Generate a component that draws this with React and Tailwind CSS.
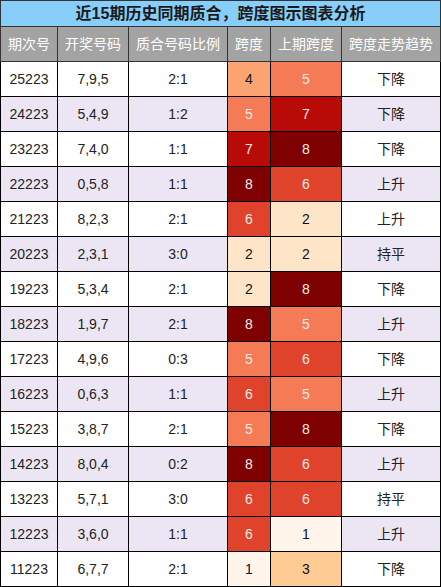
import React from "react";

const rows = [
  ["25223", "7,9,5", "2:1", 4, 5, "下降"],
  ["24223", "5,4,9", "1:2", 5, 7, "下降"],
  ["23223", "7,4,0", "1:1", 7, 8, "下降"],
  ["22223", "0,5,8", "1:1", 8, 6, "上升"],
  ["21223", "8,2,3", "2:1", 6, 2, "上升"],
  ["20223", "2,3,1", "3:0", 2, 2, "持平"],
  ["19223", "5,3,4", "2:1", 2, 8, "下降"],
  ["18223", "1,9,7", "2:1", 8, 5, "上升"],
  ["17223", "4,9,6", "0:3", 5, 6, "下降"],
  ["16223", "0,6,3", "1:1", 6, 5, "上升"],
  ["15223", "3,8,7", "2:1", 5, 8, "下降"],
  ["14223", "8,0,4", "0:2", 8, 6, "上升"],
  ["13223", "5,7,1", "3:0", 6, 6, "持平"],
  ["12223", "3,6,0", "1:1", 6, 1, "上升"],
  ["11223", "6,7,7", "2:1", 1, 3, "下降"],
];

// heat colours for span values
const heat = {
  0: "bg-[#fff5eb] text-[#111]",
  1: "bg-[#fff5eb] text-[#111]",
  2: "bg-[#fee5c8] text-[#111]",
  3: "bg-[#fdcb93] text-[#111]",
  4: "bg-[#fca572] text-[#111]",
  5: "bg-[#f47b55] text-[#f5ece8]",
  6: "bg-[#e0432c] text-[#f5ece8]",
  7: "bg-[#b80b08] text-[#f5ece8]",
  8: "bg-[#7f0000] text-[#f5ece8]",
  9: "bg-[#7f0000] text-[#f5ece8]",
};

const headers = ["期次号", "开奖号码", "质合号码比例", "跨度", "上期跨度", "跨度走势趋势"];

export default function App() {
  return (
    <div className="w-[441px] h-[587px] bg-white font-['Liberation_Sans','Noto_Sans_CJK_SC',sans-serif] text-[14px] text-[#222]">
      <table className="w-[441px] table-fixed border-collapse">
        <colgroup>
          <col className="w-[57px]" />
          <col className="w-[71px]" />
          <col className="w-[99px]" />
          <col className="w-[43px]" />
          <col className="w-[71px]" />
          <col />
        </colgroup>
        <thead>
          <tr className="h-[26px]">
            <th colSpan={6} className="border border-[#333] bg-[#87cefa] p-0 text-[16px] font-bold text-[#1a1a1a] leading-[24px]">
              近15期历史同期质合，跨度图示图表分析
            </th>
          </tr>
          <tr className="h-[35px]">
            {headers.map((h) => (
              <th key={h} className="border border-[#333] bg-[#a3a3a3] p-0 text-[14px] font-normal text-white">
                {h}
              </th>
            ))}
          </tr>
        </thead>
        <tbody>
          {rows.map((r, i) => (
            <tr key={r[0]} className={i % 2 === 1 ? "h-[35px] bg-[#ece6f4]" : "h-[35px] bg-white"}>
              <td className="border border-black p-0 text-center">{r[0]}</td>
              <td className="border border-black p-0 text-center">{r[1]}</td>
              <td className="border border-black p-0 text-center">{r[2]}</td>
              <td className={`border border-black p-0 text-center ${heat[r[3]]}`}>{r[3]}</td>
              <td className={`border border-black p-0 text-center ${heat[r[4]]}`}>{r[4]}</td>
              <td className="border border-black p-0 text-center">{r[5]}</td>
            </tr>
          ))}
        </tbody>
      </table>
    </div>
  );
}
